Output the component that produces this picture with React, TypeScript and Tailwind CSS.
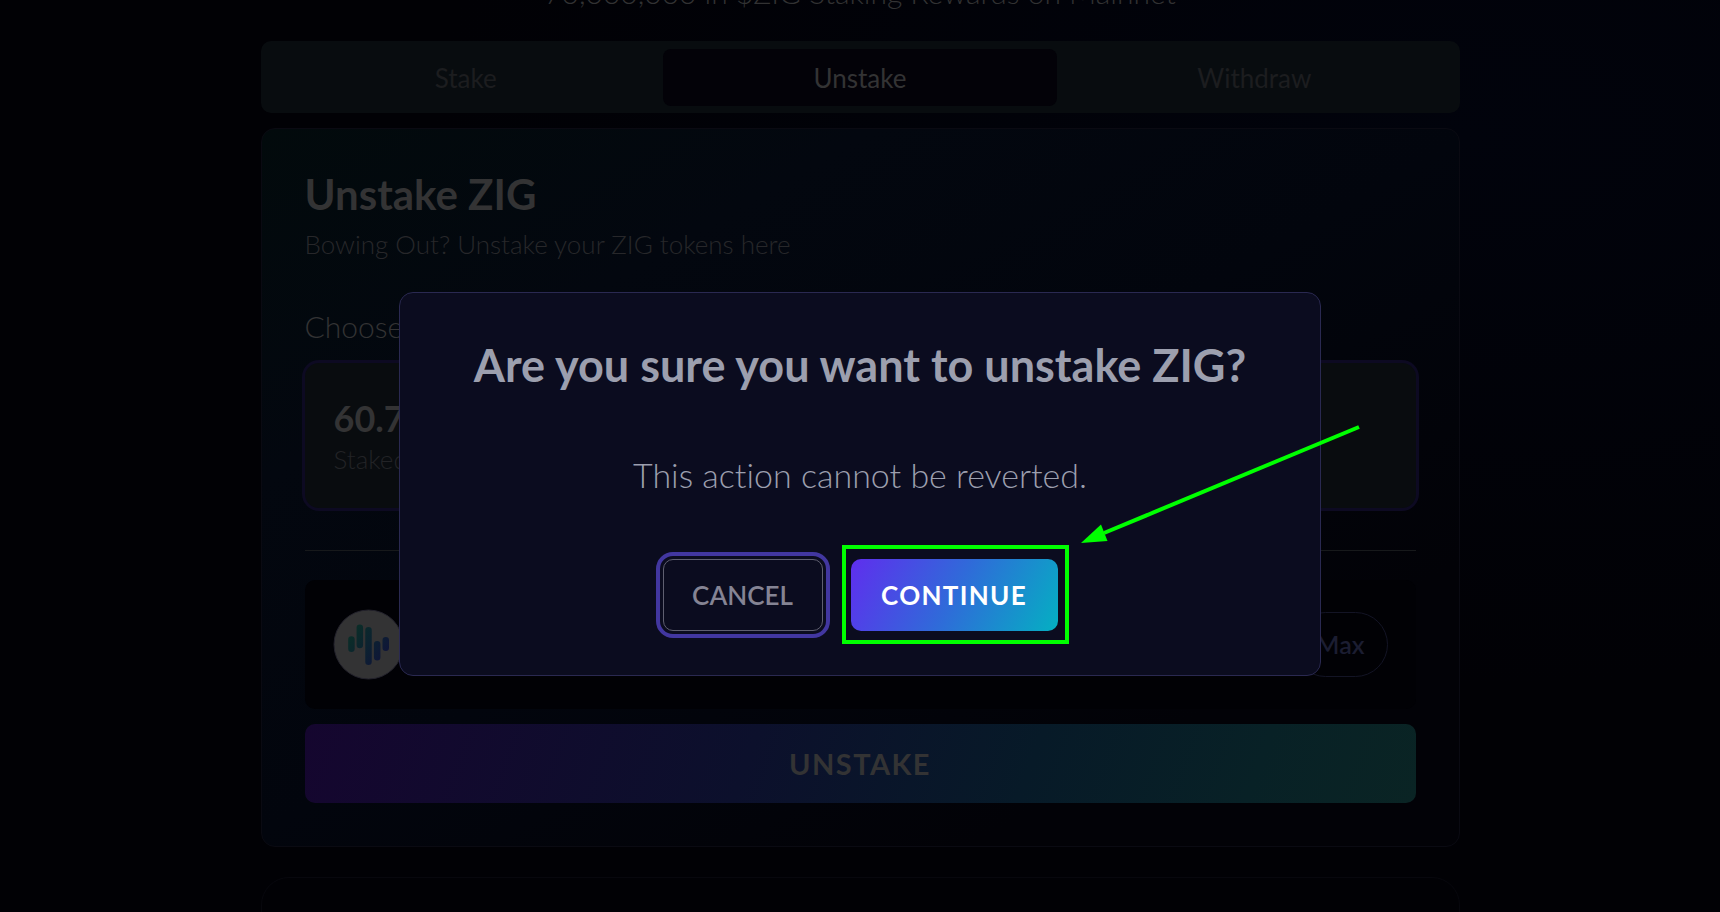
import React from "react";

function TokenLogo() {
  return (
    <svg viewBox="0 0 72 72" className="size-[71px] shrink-0" aria-hidden="true">
      <defs>
        <linearGradient id="bars" gradientUnits="userSpaceOnUse" x1="15" y1="20" x2="58" y2="50">
          <stop offset="0" stopColor="#0a3025" />
          <stop offset="0.5" stopColor="#0c2230" />
          <stop offset="1" stopColor="#10113a" />
        </linearGradient>
      </defs>
      <circle cx="36" cy="36" r="35" fill="#333334" stroke="#23222c" />
      <g stroke="url(#bars)" strokeWidth="6.6" strokeLinecap="round">
        <path d="M18.7 31v9.400M27.2 19v17.400M36 21.600v31.800M44.800 35.800v13.200M53.500 31.600v7.800" />
      </g>
    </svg>
  );
}

function Tab({ label, active = false }: { label: string; active?: boolean }) {
  return (
    <button
      type="button"
      role="tab"
      aria-selected={active}
      className={
        active
          ? "flex-1 rounded-lg bg-[#030208] text-[26px] leading-8 text-[#333334]"
          : "flex-1 rounded-lg text-[26px] leading-8 text-[#1c1d1f]"
      }
    >
      {label}
    </button>
  );
}

function ConfirmDialog() {
  return (
    <div className="fixed inset-0 flex items-center justify-center pt-14">
      <div
        role="dialog"
        aria-modal="true"
        aria-labelledby="confirm-title"
        className="relative flex w-[922px] flex-col items-center rounded-[14px] border border-[#2a2951] bg-[#0b0c1f] pt-[46px] pb-11"
      >
        <h2 id="confirm-title" className="text-[45px] leading-[52px] font-bold text-[#9c9fae]">
          Are you sure you want to unstake ZIG?
        </h2>
        <p className="mt-16 text-[34px] leading-10 font-light text-[#9c9fae]">
          This action cannot be reverted.
        </p>
        <div className="mt-16 flex gap-7">
          <button
            type="button"
            className="h-18 w-40 rounded-[10px] border border-[#5f5f70] text-[26px] font-semibold text-[#858494] outline-4 outline-offset-3 outline-[#4237a0]"
          >
            CANCEL
          </button>
          <div className="relative flex">
            <button
              type="button"
              className="h-18 w-[207px] rounded-[10px] bg-[linear-gradient(118deg,#5f2eee_0%,#2f6bd9_50%,#04b0c2_100%)] text-[26px] font-bold tracking-wider text-white"
            >
              CONTINUE
            </button>
            <div className="pointer-events-none absolute -top-[14px] -right-[11px] -bottom-[13px] -left-[9px] border-4 border-[#00ff00]" />
            <svg
              viewBox="0 0 282 122"
              className="pointer-events-none absolute bottom-[86px] left-[229px] h-[122px] w-[282px]"
              aria-hidden="true"
            >
              <path d="M279 4L24 110" stroke="#00ff00" strokeWidth="4" />
              <path d="M1 120L21 101.500L27.500 118Z" fill="#00ff00" />
            </svg>
          </div>
        </div>
      </div>
    </div>
  );
}

export default function App() {
  return (
    <div className="h-screen overflow-hidden bg-[#010105] bg-[radial-gradient(ellipse_at_85%_15%,#01030c_0%,transparent_50%)] font-['Lato',sans-serif] [font-variant-ligatures:none]">
      <main className="mx-auto w-full max-w-[1199px]">
        <p className="-mt-6 text-center text-[30px] leading-8 font-light text-[#323233]">
          70,000,000 in $ZIG Staking Rewards on Mainnet
        </p>
        <div role="tablist" className="mt-[33px] flex h-18 rounded-[10px] bg-[#080c0f] px-2 pt-2 pb-[7px]">
          <Tab label="Stake" />
          <Tab label="Unstake" active />
          <Tab label="Withdraw" />
        </div>

        <section className="mt-[15px] rounded-[14px] border border-[#0a0a12] bg-[linear-gradient(150deg,#020a0c_0%,#03070f_25%,#02050d_50%,#020207_80%)] px-[43px] pt-[43px] pb-[43px]">
          <h1 className="text-[42px] leading-[44px] font-bold text-[#333334]">Unstake ZIG</h1>
          <p className="mt-2 text-[26px] leading-10 font-light text-[#27272a]">
            Bowing Out? Unstake your ZIG tokens here
          </p>
          <h2 className="mt-11 text-[30px] leading-9 font-light text-[#333334]">Choose</h2>
          <div className="mt-[19px] h-[145px] rounded-[14px] bg-[#090c0f] px-[29px] pt-8 ring-3 ring-[#0d0a22]">
            <div className="text-[36px] leading-[46px] font-bold text-[#333334]">60.7</div>
            <div className="text-[26px] leading-9 font-light text-[#222326]">Staked</div>
          </div>
          <hr className="mt-[42px] border-[#17191b]" />
          <div className="mt-[29px] flex h-[129px] items-center justify-between rounded-[10px] bg-[#010105] px-7">
            <TokenLogo />
            <button
              type="button"
              className="h-[65px] rounded-full border border-[#131425] px-[22px] text-[25px] font-semibold text-[#1b1d31]"
            >
              Max
            </button>
          </div>
          <button
            type="button"
            className="mt-[15px] h-[79px] w-full rounded-[10px] bg-[linear-gradient(110deg,#15062f_0%,#0c102c_40%,#071a28_65%,#082126_85%,#0a2424_100%)] text-[29px] font-bold tracking-wider text-[#333334]"
          >
            UNSTAKE
          </button>
        </section>

        <section className="mt-[30px] h-40 rounded-[28px] border border-[#07070d]" />
      </main>
      <ConfirmDialog />
    </div>
  );
}
